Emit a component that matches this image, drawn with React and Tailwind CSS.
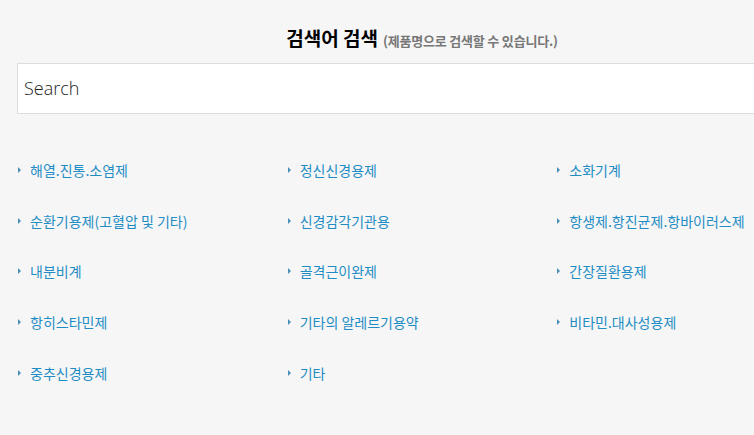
import React from 'react';

const items = [
    '해열.진통.소염제', '정신신경용제', '소화기계',
    '순환기용제(고혈압 및 기타)', '신경감각기관용', '항생제.항진균제.항바이러스제',
    '내분비계', '골격근이완제', '간장질환용제',
    '항히스타민제', '기타의 알레르기용약', '비타민.대사성용제',
    '중추신경용제', '기타',
];

const App = () => {
    return (
        <div className="min-h-screen w-full overflow-hidden bg-[#f6f6f6]" style={{ fontFamily: '"Noto Sans CJK KR", "Noto Sans", sans-serif' }}>
            <div className="ml-[17px] w-[810px] pt-[23px]">
                {/* Title */}
                <div className="flex items-baseline justify-center gap-[5px] h-[40px]">
                    <h2 className="text-[19px] font-bold text-black leading-[30px]">검색어 검색</h2>
                    <span className="text-[13px] font-bold text-[#777] tracking-[-0.2px]">(제품명으로 검색할 수 있습니다.)</span>
                </div>

                {/* Search box */}
                <div className="h-[51px] bg-white border border-[#dddddd] flex items-center px-[6px]">
                    <input
                        type="text"
                        placeholder="Search"
                        className="w-full bg-transparent outline-none text-[18px] font-light text-[#333] placeholder:text-[#222]"
                        style={{ fontFamily: '"Open Sans", "Noto Sans", sans-serif' }}
                    />
                </div>

                {/* Categories */}
                <div className="grid grid-cols-3 mt-[31px] ml-[1px]">
                    {items.map((name) => (
                        <div key={name} className="h-[50.6px] flex items-center">
                            <span className="w-0 h-0 border-y-[3px] border-y-transparent border-l-[3px] border-l-[#4a8fb5] mr-[9px]" />
                            <span className="text-[14px] text-[#1f8dc4] leading-[20px]">{name}</span>
                        </div>
                    ))}
                </div>
            </div>
        </div>
    );
};

export default App;
